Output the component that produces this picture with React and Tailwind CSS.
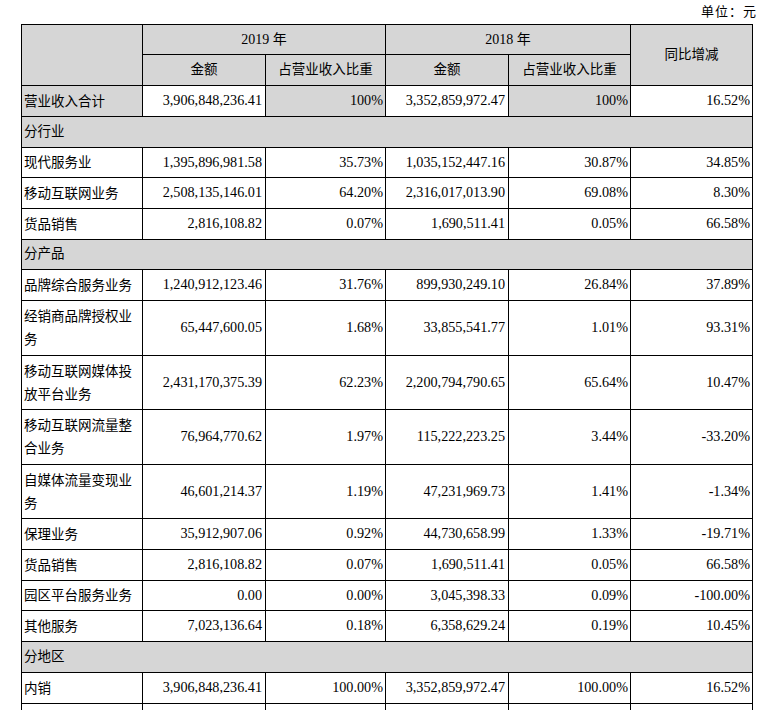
import React from 'react';

const GRAY = 'bg-[#d6d6d6]';

const rows = [
  { label: ['营业收入合计'], v: ['3,906,848,236.41', '100%', '3,352,859,972.47', '100%', '16.52%'], h: 31, total: true },
  { section: '分行业', h: 31 },
  { label: ['现代服务业'], v: ['1,395,896,981.58', '35.73%', '1,035,152,447.16', '30.87%', '34.85%'], h: 30 },
  { label: ['移动互联网业务'], v: ['2,508,135,146.01', '64.20%', '2,316,017,013.90', '69.08%', '8.30%'], h: 31 },
  { label: ['货品销售'], v: ['2,816,108.82', '0.07%', '1,690,511.41', '0.05%', '66.58%'], h: 31 },
  { section: '分产品', h: 30 },
  { label: ['品牌综合服务业务'], v: ['1,240,912,123.46', '31.76%', '899,930,249.10', '26.84%', '37.89%'], h: 31 },
  { label: ['经销商品牌授权业', '务'], v: ['65,447,600.05', '1.68%', '33,855,541.77', '1.01%', '93.31%'], h: 55 },
  { label: ['移动互联网媒体投', '放平台业务'], v: ['2,431,170,375.39', '62.23%', '2,200,794,790.65', '65.64%', '10.47%'], h: 54 },
  { label: ['移动互联网流量整', '合业务'], v: ['76,964,770.62', '1.97%', '115,222,223.25', '3.44%', '-33.20%'], h: 55 },
  { label: ['自媒体流量变现业', '务'], v: ['46,601,214.37', '1.19%', '47,231,969.73', '1.41%', '-1.34%'], h: 54 },
  { label: ['保理业务'], v: ['35,912,907.06', '0.92%', '44,730,658.99', '1.33%', '-19.71%'], h: 31 },
  { label: ['货品销售'], v: ['2,816,108.82', '0.07%', '1,690,511.41', '0.05%', '66.58%'], h: 31 },
  { label: ['园区平台服务业务'], v: ['0.00', '0.00%', '3,045,398.33', '0.09%', '-100.00%'], h: 30 },
  { label: ['其他服务'], v: ['7,023,136.64', '0.18%', '6,358,629.24', '0.19%', '10.45%'], h: 31 },
  { section: '分地区', h: 31 },
  { label: ['内销'], v: ['3,906,848,236.41', '100.00%', '3,352,859,972.47', '100.00%', '16.52%'], h: 31 },
  { label: [''], v: ['', '', '', '', ''], h: 31 },
];

const cell = 'border border-black p-0';
const num = 'text-right text-[14.2px]';

export default function App() {
  return (
    <div className="w-[778px] h-[710px] overflow-hidden bg-white text-black text-[13.5px] font-['Liberation_Serif','Noto_Sans_CJK_SC',serif]">
      <div className="h-[24px] flex items-center justify-end pr-[21px] text-[13px] tracking-[1px]">单位：元</div>
      <table className="ml-[21px] table-fixed border-collapse w-[731px]">
        <colgroup>
          <col className="w-[121px]" />
          <col className="w-[123px]" />
          <col className="w-[120px]" />
          <col className="w-[123px]" />
          <col className="w-[122px]" />
          <col className="w-[122px]" />
        </colgroup>
        <thead>
          <tr className="h-[30px]">
            <td rowSpan={2} className={`${cell} ${GRAY}`}></td>
            <td colSpan={2} className={`${cell} ${GRAY} text-center text-[14px]`}>2019 年</td>
            <td colSpan={2} className={`${cell} ${GRAY} text-center text-[14px]`}>2018 年</td>
            <td rowSpan={2} className={`${cell} ${GRAY} text-center`}>同比增减</td>
          </tr>
          <tr className="h-[31px]">
            <td className={`${cell} ${GRAY} text-center`}>金额</td>
            <td className={`${cell} ${GRAY} text-center`}>占营业收入比重</td>
            <td className={`${cell} ${GRAY} text-center`}>金额</td>
            <td className={`${cell} ${GRAY} text-center`}>占营业收入比重</td>
          </tr>
        </thead>
        <tbody>
          {rows.map((r, i) =>
            r.section ? (
              <tr key={i} style={{ height: r.h }}>
                <td colSpan={6} className={`${cell} ${GRAY} pl-[2px]`}>{r.section}</td>
              </tr>
            ) : (
              <tr key={i} style={{ height: r.h }}>
                <td className={`${cell} pl-[2px] leading-[23px] ${r.total ? GRAY : ''}`}>
                  {r.label.map((l, j) => (
                    <div key={j}>{l}</div>
                  ))}
                </td>
                <td className={`${cell} ${num} pr-[3px]`}>{r.v[0]}</td>
                <td className={`${cell} ${num} pr-[2px] ${r.total ? GRAY : ''}`}>{r.v[1]}</td>
                <td className={`${cell} ${num} pr-[3px]`}>{r.v[2]}</td>
                <td className={`${cell} ${num} pr-[2px] ${r.total ? GRAY : ''}`}>{r.v[3]}</td>
                <td className={`${cell} ${num} pr-[2px]`}>{r.v[4]}</td>
              </tr>
            )
          )}
        </tbody>
      </table>
    </div>
  );
}
